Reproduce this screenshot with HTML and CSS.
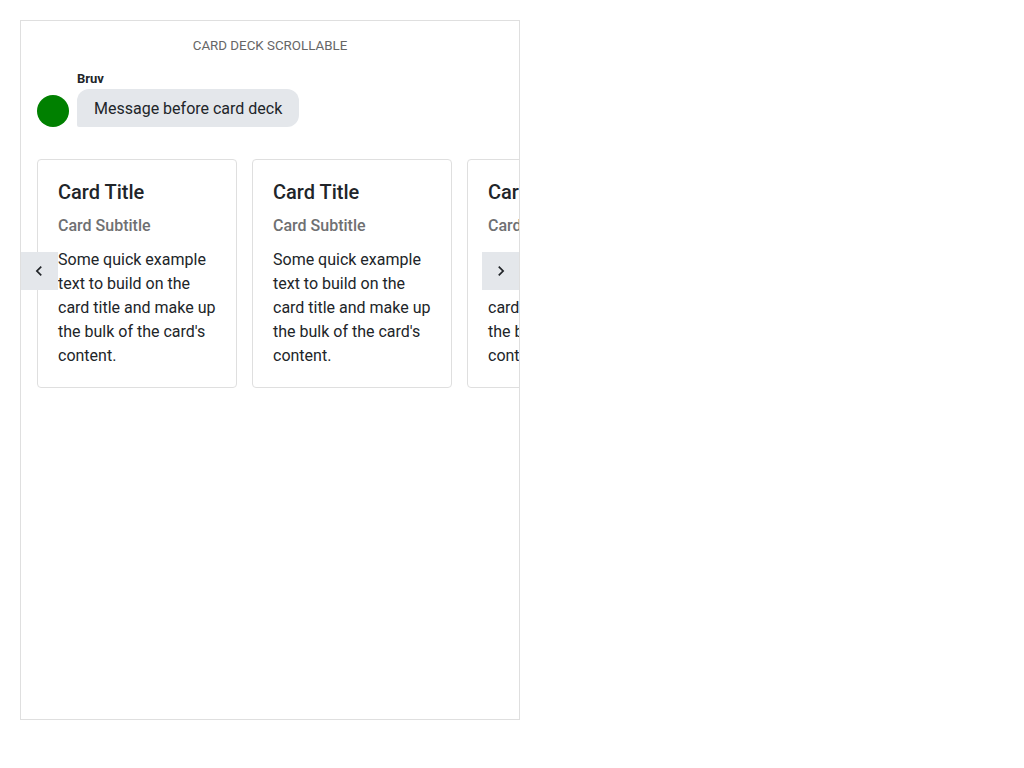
FILE: index.html
```html
<!DOCTYPE html>
<html lang="en">
<head>
<meta charset="utf-8">
<meta name="viewport" content="width=device-width, initial-scale=1">
<title>Card deck scrollable</title>
<link rel="stylesheet" href="styles.css">
</head>
<body>
<main class="page">
  <section class="chat">
    <h1 class="chat-heading">Card deck scrollable</h1>
    <div class="message">
      <span class="avatar"></span>
      <div class="message-body">
        <strong class="sender">Bruv</strong>
        <p class="bubble">Message before card deck</p>
      </div>
    </div>
    <div class="deck">
      <div class="deck-track">
        <article class="card">
          <h2 class="card-title">Card Title</h2>
          <h3 class="card-subtitle">Card Subtitle</h3>
          <p class="card-text">Some quick example text to build on the card title and make up the bulk of the card's content.</p>
        </article>
        <article class="card">
          <h2 class="card-title">Card Title</h2>
          <h3 class="card-subtitle">Card Subtitle</h3>
          <p class="card-text">Some quick example text to build on the card title and make up the bulk of the card's content.</p>
        </article>
        <article class="card">
          <h2 class="card-title">Card Title</h2>
          <h3 class="card-subtitle">Card Subtitle</h3>
          <p class="card-text">Some quick example text to build on the card title and make up the bulk of the card's content.</p>
        </article>
      </div>
      <button class="deck-button deck-button-prev" type="button" aria-label="Previous">
        <svg class="chevron" viewBox="0 0 24 24" aria-hidden="true"><path d="M15.41 7.41 14 6l-6 6 6 6 1.41-1.41L10.83 12z"/></svg>
      </button>
      <button class="deck-button deck-button-next" type="button" aria-label="Next">
        <svg class="chevron" viewBox="0 0 24 24" aria-hidden="true"><path d="M10 6 8.59 7.41 13.17 12l-4.58 4.59L10 18l6-6z"/></svg>
      </button>
    </div>
  </section>
</main>
</body>
</html>
```

FILE: styles.css
```css
* {
  box-sizing: border-box;
}

body {
  margin: 0;
  background: #fff;
  color: #212529;
  font: 400 16px/24px Roboto, "Liberation Sans", sans-serif;
}

h1, h2, h3, p {
  margin: 0;
}

.page {
  display: flex;
  min-height: 100vh;
  padding: 20px 20px 48px;
}

.chat {
  flex: 1;
  min-width: 0;
  max-width: 500px;
  border: 1px solid #dfdfdf;
}

.chat-heading {
  padding: 15px 16px 13px;
  color: #666;
  font-size: smaller;
  font-weight: 400;
  line-height: 20px;
  text-align: center;
  text-transform: uppercase;
}

.message {
  display: flex;
  align-items: flex-end;
  gap: 8px;
  padding: 0 16px;
}

.avatar {
  flex: none;
  width: 32px;
  height: 32px;
  border-radius: 50%;
  background: #008000;
}

.sender {
  display: block;
  font-size: 13px;
  font-weight: 700;
  line-height: 20px;
}

.bubble {
  padding: 8px 17px 6px;
  border-radius: 12px 12px 12px 2px;
  background: #e4e7eb;
}

.deck {
  position: relative;
  overflow: hidden;
  margin-top: 27px;
}

.deck-track {
  display: flex;
  gap: 15px;
  overflow-x: auto;
  padding: 5px 16px 0;
  scrollbar-width: none;
}

.card {
  flex: 0 0 200px;
  padding: 20px 20px 19px;
  border: 1px solid #dfdfdf;
  border-radius: 4px;
}

.card-title {
  margin-bottom: 12px;
  font-size: 20px;
  font-weight: 500;
  line-height: 24px;
}

.card-subtitle {
  margin-bottom: 12px;
  color: #6f7072;
  font-size: 16px;
  font-weight: 500;
  line-height: 20px;
}

.deck-button {
  position: absolute;
  top: 50%;
  display: flex;
  align-items: center;
  justify-content: center;
  width: 38px;
  height: 38px;
  margin-top: -19px;
  padding: 0;
  border: 0;
  background: #e4e7eb;
  color: #212529;
  cursor: pointer;
}

.deck-button-prev {
  left: -1px;
}

.deck-button-next {
  right: -1px;
}

.chevron {
  width: 20px;
  height: 20px;
  fill: currentColor;
}
```
